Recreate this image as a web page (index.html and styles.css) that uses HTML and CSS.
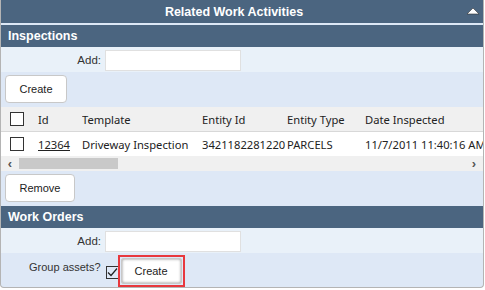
FILE: index.html
```html
<!DOCTYPE html>
<html lang="en">
<head>
  <meta charset="UTF-8">
  <title>Related Work Activities</title>
  <link rel="stylesheet" href="styles.css">
</head>
<body>

<div class="panel">
  <div class="panel-title">
    Related Work Activities
    <svg class="collapse" width="12" height="7" viewBox="0 0 12 7"><polygon points="6,0 12,6 0,6" fill="#fff" stroke="#333" stroke-width="0.6"/></svg>
  </div>

  <div class="section-head">Inspections</div>
  <div class="add-row">
    <label>Add:</label>
    <input type="text" class="add-input">
  </div>
  <div class="btn-row">
    <button class="btn btn-create">Create</button>
  </div>

  <div class="grid-wrap">
    <table class="grid">
      <tr class="grid-head">
        <th class="c-check"><span class="box"></span></th>
        <th class="c-id">Id</th>
        <th class="c-tpl">Template</th>
        <th class="c-eid">Entity Id</th>
        <th class="c-etype">Entity Type</th>
        <th class="c-date">Date Inspected</th>
      </tr>
      <tr>
        <td class="c-check"><span class="box"></span></td>
        <td class="c-id"><a href="#">12364</a></td>
        <td class="c-tpl">Driveway Inspection</td>
        <td class="c-eid">3421182281220</td>
        <td class="c-etype">PARCELS</td>
        <td class="c-date">11/7/2011 11:40:16 AM</td>
      </tr>
    </table>
    <div class="hscroll">
      <span class="arrow">&#8249;</span>
      <span class="thumb"></span>
      <span class="arrow right">&#8250;</span>
    </div>
  </div>

  <div class="btn-row">
    <button class="btn btn-remove">Remove</button>
  </div>

  <div class="section-head">Work Orders</div>
  <div class="add-row">
    <label>Add:</label>
    <input type="text" class="add-input">
  </div>
  <div class="group-row">
    <label>Group assets?</label>
    <span class="box checked">
      <svg width="13" height="13" viewBox="0 0 13 13"><path d="M2 6.5 L5 9.5 L11 2.5" fill="none" stroke="#222" stroke-width="1.2"/></svg>
    </span>
    <span class="highlight">
      <button class="btn btn-wo">Create</button>
    </span>
  </div>
</div>

</body>
</html>
```
FILE: styles.css
```css
body {
  margin: 0;
  padding: 0;
  background-color: #fff;
  font-family: "Liberation Sans", Arial, sans-serif;
}
.panel {
  width: 482px;
  height: 287px;
  border: 1px solid #b4b4b4;
  border-top: none;
  border-radius: 0 0 4px 4px;
  background-color: #dee8f6;
  overflow: hidden;
}
.panel-title {
  position: relative;
  height: 23px;
  line-height: 24px;
  padding-right: 16px;
  background-color: #4b6580;
  color: #fff;
  font-weight: bold;
  font-size: 12.5px;
  text-align: center;
  border-bottom: 2px solid #dde8f6;
}
.collapse {
  position: absolute;
  right: 4px;
  top: 8px;
}
.section-head {
  height: 22px;
  line-height: 23px;
  padding-left: 7px;
  background-color: #4b6580;
  color: #fff;
  font-weight: bold;
  font-size: 12.5px;
}
.add-row {
  display: flex;
  align-items: center;
  height: 25px;
  background-color: #e9f1f9;
  font-size: 11.5px;
  color: #333;
}
.add-row label {
  width: 100px;
  text-align: right;
  margin-right: 4px;
}
.add-input {
  box-sizing: border-box;
  width: 136px;
  height: 21px;
  margin: 0;
  border: 1px solid #e0e0e0;
  background: #fff;
  margin-top: 1px;
}
.btn-row {
  height: 35px;
  padding: 3px 0 0 4px;
  box-sizing: border-box;
}
.btn {
  height: 28px;
  background: #fff;
  border: 1px solid #c8c8c8;
  border-radius: 4px;
  font-family: "Liberation Sans", Arial, sans-serif;
  font-size: 11px;
  color: #222;
  padding: 0;
}
.btn-create {
  width: 62px;
}
.btn-remove {
  width: 70px;
}
.grid-wrap {
  background: #fff;
  overflow: hidden;
}
.grid {
  border-collapse: collapse;
  table-layout: fixed;
  width: 500px;
  font-family: "Noto Sans", "Open Sans", sans-serif;
  font-size: 11.2px;
  color: #222;
}
.grid th, .grid td {
  height: 24px;
  padding: 0;
  text-align: left;
  font-weight: normal;
  white-space: nowrap;
  overflow: hidden;
}
.grid-head {
  background-color: #f0f0f0;
  border-bottom: 1px solid #d8d8d8;
}
.c-check { width: 37px; padding-left: 9px !important; box-sizing: border-box; }
.c-id { width: 44px; }
.c-tpl { width: 120px; }
.c-eid { width: 85px; }
.c-etype { width: 78px; }
.c-date { width: 136px; }
.box {
  display: block;
  width: 12px;
  height: 12px;
  border: 1px solid #333;
  background: #fff;
}
.grid a {
  color: #222;
  text-decoration: underline;
}
.hscroll {
  display: flex;
  align-items: center;
  height: 15px;
  background-color: #f0f0f0;
  font-size: 13px;
  font-weight: bold;
  color: #555;
}
.hscroll .arrow {
  width: 18px;
  text-align: center;
  line-height: 15px;
}
.hscroll .thumb {
  width: 99px;
  height: 11px;
  background: #c9c9c9;
}
.hscroll .right {
  margin-left: auto;
}
.group-row {
  display: flex;
  align-items: center;
  height: 33px;
  font-size: 11px;
  color: #333;
}
.group-row label {
  margin-left: 28px;
  margin-right: 5px;
  margin-top: -6px;
}
.box.checked {
  width: 13px;
  height: 13px;
  border: 1px solid #333;
  background: transparent;
  box-sizing: border-box;
  margin-top: 6px;
}
.box.checked svg {
  display: block;
  margin: -1px 0 0 -1px;
}
.highlight {
  border: 2px solid #e8383d;
  padding: 1px;
  margin-left: -1px;
  margin-top: 2px;
  display: flex;
}
.btn-wo {
  width: 61px;
  height: 26px;
  border-radius: 2px;
  box-shadow: inset 0 0 3px #888;
}
```
